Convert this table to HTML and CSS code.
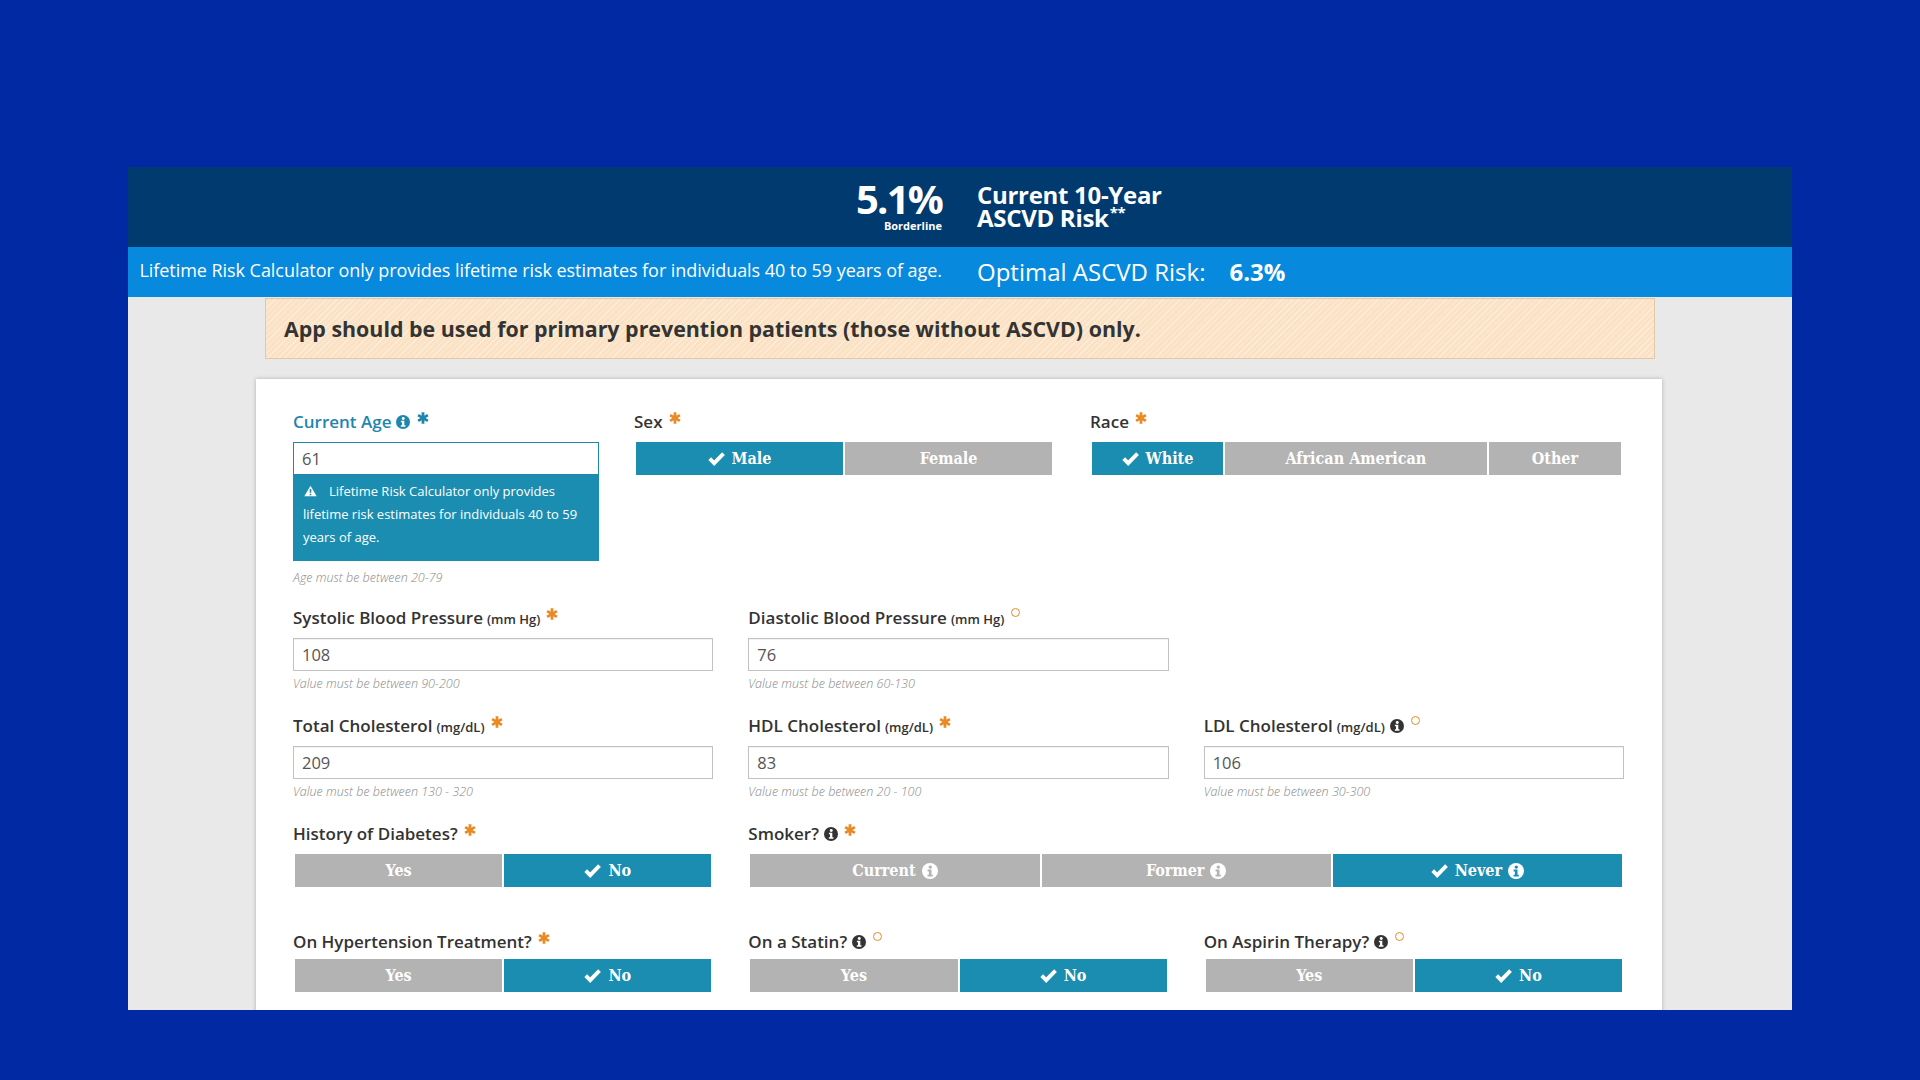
FILE: index.html
```html
<!DOCTYPE html>
<html lang="en">
<head>
<meta charset="utf-8">
<title>ASCVD Risk Estimator</title>
<link rel="stylesheet" href="styles.css">
</head>
<body>
<svg width="0" height="0" class="defs">
  <defs>
    <symbol id="info" viewBox="0 0 16 16">
      <circle cx="8" cy="8" r="8" class="outer"/>
      <circle cx="8.3" cy="4.1" r="1.7" class="inner"/>
      <path d="M5.6 6.6h3.9v5.1h1.3v1.8H5.5v-1.8h1.4V8.4H5.6z" class="inner"/>
    </symbol>
    <symbol id="ast" viewBox="0 0 12 12">
      <path d="M6 0.3v11.4M1.1 3.15l9.8 5.7M1.1 8.85l9.8-5.7" fill="none" stroke-width="2.8"/>
    </symbol>
    <symbol id="check" viewBox="0 0 16 16">
      <path d="M1.6 8.2l4.2 4.2L14.6 3.4" fill="none" stroke="#fff" stroke-width="3.6" stroke-linejoin="miter"/>
    </symbol>
  </defs>
</svg>

<div class="app">
  <header class="hdr">
    <div class="hdr-left">
      <div class="big">5.1%</div>
      <div class="level">Borderline</div>
    </div>
    <div class="hdr-right">
      <div class="title">Current 10-Year<br>ASCVD Risk<sup>**</sup></div>
    </div>
  </header>

  <div class="subbar">
    <div class="sub-left">Lifetime Risk Calculator only provides lifetime risk estimates for individuals 40 to 59 years of age.</div>
    <div class="sub-right"><span class="opt-label">Optimal ASCVD Risk:</span><span class="opt-val">6.3%</span></div>
  </div>

  <main class="body">
    <div class="banner">App should be used for primary prevention patients (those without ASCVD) only.</div>

    <section class="card">
      <div class="row row-first">
        <div class="field">
          <div class="label focus">Current Age <svg class="info teal"><use href="#info"/></svg> <svg class="ast teal-ast"><use href="#ast"/></svg></div>
          <input class="inp inp-focus" type="text" value="61">
          <div class="tip"><svg class="warn" viewBox="0 0 16 14"><path d="M8 0.5L15.6 13.5H0.4z" fill="#fff"/><path d="M8 4.6v4.6" stroke="#1b8db1" stroke-width="2"/><rect x="7" y="10.4" width="2" height="1.9" fill="#1b8db1"/></svg><span>Lifetime Risk Calculator only provides lifetime risk estimates for individuals 40 to 59 years of age.</span></div>
          <div class="help help-tip">Age must be between 20-79</div>
        </div>
        <div class="field">
          <div class="label">Sex <svg class="ast"><use href="#ast"/></svg></div>
          <div class="btns">
            <button class="btn on"><svg class="chk"><use href="#check"/></svg>Male</button>
            <button class="btn">Female</button>
          </div>
        </div>
        <div class="field">
          <div class="label">Race <svg class="ast"><use href="#ast"/></svg></div>
          <div class="btns race">
            <button class="btn on"><svg class="chk"><use href="#check"/></svg>White</button>
            <button class="btn">African American</button>
            <button class="btn">Other</button>
          </div>
        </div>
      </div>

      <div class="row">
        <div class="field">
          <div class="label">Systolic Blood Pressure <small>(mm Hg)</small> <svg class="ast"><use href="#ast"/></svg></div>
          <input class="inp" type="text" value="108">
          <div class="help">Value must be between 90-200</div>
        </div>
        <div class="field">
          <div class="label">Diastolic Blood Pressure <small>(mm Hg)</small> <span class="opt"></span></div>
          <input class="inp" type="text" value="76">
          <div class="help">Value must be between 60-130</div>
        </div>
        <div class="field"></div>
      </div>

      <div class="row">
        <div class="field">
          <div class="label">Total Cholesterol <small>(mg/dL)</small> <svg class="ast"><use href="#ast"/></svg></div>
          <input class="inp" type="text" value="209">
          <div class="help">Value must be between 130 - 320</div>
        </div>
        <div class="field">
          <div class="label">HDL Cholesterol <small>(mg/dL)</small> <svg class="ast"><use href="#ast"/></svg></div>
          <input class="inp" type="text" value="83">
          <div class="help">Value must be between 20 - 100</div>
        </div>
        <div class="field">
          <div class="label">LDL Cholesterol <small>(mg/dL)</small> <svg class="info"><use href="#info"/></svg> <span class="opt"></span></div>
          <input class="inp" type="text" value="106">
          <div class="help">Value must be between 30-300</div>
        </div>
      </div>

      <div class="row">
        <div class="field">
          <div class="label">History of Diabetes? <svg class="ast"><use href="#ast"/></svg></div>
          <div class="btns">
            <button class="btn">Yes</button>
            <button class="btn on"><svg class="chk"><use href="#check"/></svg>No</button>
          </div>
          <div class="help"></div>
        </div>
        <div class="field span2">
          <div class="label">Smoker? <svg class="info"><use href="#info"/></svg> <svg class="ast"><use href="#ast"/></svg></div>
          <div class="btns">
            <button class="btn">Current <svg class="binfo"><use href="#info"/></svg></button>
            <button class="btn">Former <svg class="binfo"><use href="#info"/></svg></button>
            <button class="btn on"><svg class="chk"><use href="#check"/></svg>Never <svg class="binfo"><use href="#info"/></svg></button>
          </div>
          <div class="help"></div>
        </div>
      </div>

      <div class="row row-last">
        <div class="field">
          <div class="label">On Hypertension Treatment? <svg class="ast"><use href="#ast"/></svg></div>
          <div class="btns">
            <button class="btn">Yes</button>
            <button class="btn on"><svg class="chk"><use href="#check"/></svg>No</button>
          </div>
        </div>
        <div class="field">
          <div class="label">On a Statin? <svg class="info"><use href="#info"/></svg> <span class="opt"></span></div>
          <div class="btns">
            <button class="btn">Yes</button>
            <button class="btn on"><svg class="chk"><use href="#check"/></svg>No</button>
          </div>
        </div>
        <div class="field">
          <div class="label">On Aspirin Therapy? <svg class="info"><use href="#info"/></svg> <span class="opt"></span></div>
          <div class="btns">
            <button class="btn">Yes</button>
            <button class="btn on"><svg class="chk"><use href="#check"/></svg>No</button>
          </div>
        </div>
      </div>
    </section>
  </main>
</div>
</body>
</html>
```

FILE: styles.css
```css
* { box-sizing: border-box; }

html, body {
  margin: 0;
  padding: 0;
}

body {
  background: #0029a3;
  font-family: "Open Sans", "Liberation Sans", sans-serif;
  color: #333;
  padding-top: 167px;
  height: 1080px;
  overflow: hidden;
}

.defs { position: absolute; }

/* icon colours (resolved inside <use> shadow trees through custom properties) */
.outer { fill: var(--ic-outer, #333); }
.inner { fill: var(--ic-inner, #fff); }

.app {
  margin: 0 128px;
  height: 843px;
  overflow: hidden;
  background: #e9e9e9;
}

/* Header */
.hdr {
  display: grid;
  grid-template-columns: 1fr 1fr;
  height: 80px;
  background: #003a6e;
  color: #fff;
}

.hdr-left {
  display: flex;
  flex-direction: column;
  align-items: flex-end;
  padding-right: 18px;
  padding-top: 12px;
}

.big {
  font-size: 40px;
  font-weight: 700;
  line-height: 40px;
  letter-spacing: -1.8px;
}

.level {
  font-size: 11px;
  font-weight: 700;
  line-height: 12px;
  margin-top: 1px;
}

.hdr-right {
  padding-left: 17px;
  padding-top: 16px;
}

.title {
  font-size: 24px;
  font-weight: 700;
  line-height: 23px;
  letter-spacing: -0.3px;
}

.title sup {
  font-size: 15px;
  line-height: 0;
  vertical-align: 9px;
  margin-left: 1px;
}

/* Sub bar */
.subbar {
  display: grid;
  grid-template-columns: 1fr 1fr;
  height: 50px;
  background: #0789dd;
  color: #fff;
  align-items: center;
}

.sub-left {
  font-size: 18px;
  text-align: right;
  padding-right: 18px;
  white-space: nowrap;
  letter-spacing: -0.05px;
  margin-top: -4px;
}

.sub-right {
  padding-left: 17px;
  font-size: 24px;
  display: flex;
  align-items: baseline;
  margin-top: -2px;
}

.opt-val {
  font-weight: 700;
  margin-left: 24px;
  font-size: 24px;
}

/* Body */
.body {
  padding-top: 1px;
}

.banner {
  margin: 0 137px;
  height: 61px;
  border: 1px solid #e2c9a6;
  background-color: #fbe2c4;
  background-image: repeating-linear-gradient(-45deg, rgba(255,255,255,0.35) 0 1px, transparent 1px 4px);
  font-size: 21.4px;
  font-weight: 700;
  color: #333;
  display: flex;
  align-items: center;
  padding-left: 18px;
}

.card {
  margin: 20px 130px 0 128px;
  background: #fff;
  box-shadow: 0 0 4px rgba(0,0,0,0.25);
  padding: 31px 38px 40px 37px;
}

.row {
  display: grid;
  grid-template-columns: 1fr 1fr 1fr;
  column-gap: 35px;
  margin-bottom: 22px;
}

.row-first {
  grid-template-columns: 306px 420px 534px;
  column-gap: 35px;
  margin-bottom: 20px;
}

.row-first .field:nth-child(3) { margin-left: 1px; }

.span2 { grid-column: span 2; }

.label {
  font-size: 17px;
  font-weight: 600;
  line-height: 24px;
  height: 24px;
  margin-bottom: 8px;
  color: #333;
  white-space: nowrap;
  display: flex;
  align-items: center;
}

.row-last .label { margin-bottom: 5px; }

.label small {
  font-size: 13px;
  font-weight: 600;
  margin-left: 4px;
  margin-top: 2px;
}

.label.focus { color: #1f86ad; }

.info {
  width: 14px;
  height: 14px;
  margin-left: 5px;
  --ic-outer: #333;
  --ic-inner: #fff;
}

.info.teal { --ic-outer: #1f86ad; }

.ast {
  width: 12px;
  height: 12px;
  stroke: #e98a25;
  margin-left: 6px;
  margin-top: -8px;
}

.ast.teal-ast { stroke: #1f86ad; margin-left: 7px; }

.opt {
  display: inline-block;
  width: 9px;
  height: 9px;
  border: 1.5px solid #e98a25;
  border-radius: 50%;
  margin-left: 7px;
  margin-top: -12px;
}

.inp {
  display: block;
  width: 100%;
  height: 33px;
  border: 1px solid #c2c2c2;
  box-shadow: inset 0 1px 1px rgba(0,0,0,0.06);
  padding: 0 8px;
  font-family: "Open Sans", "Liberation Sans", sans-serif;
  font-size: 16.5px;
  color: #555;
  background: #fff;
  outline: none;
}

.inp-focus {
  border-color: #1f86ad;
  box-shadow: none;
}

.tip {
  background: #1b8db1;
  color: #fff;
  font-size: 13px;
  line-height: 23px;
  padding: 5px 10px 9px 10px;
  height: 86px;
}

.warn {
  width: 13px;
  height: 12px;
  margin: 0 12px 0 1px;
  vertical-align: -1px;
}

.help {
  margin-top: 5px;
  height: 16px;
  font-size: 12.5px;
  line-height: 16px;
  font-style: italic;
  font-weight: 300;
  color: #888;
}

.help-tip { margin-top: 9px; }

.btns {
  display: flex;
  gap: 2px;
  height: 33px;
  margin: 1px 2px 0 2px;
}

.btn {
  flex: 1 1 0;
  border: 0;
  margin: 0;
  padding: 0;
  height: 100%;
  background: #b3b3b3;
  color: #fff;
  font-family: "DejaVu Serif", "Liberation Serif", serif;
  font-stretch: condensed;
  font-weight: 700;
  font-size: 16px;
  display: flex;
  align-items: center;
  justify-content: center;
  cursor: pointer;
}

.btn.on { background: #1b8db1; }

.race .btn:nth-child(1) { flex: 107 1 0; }
.race .btn:nth-child(2) { flex: 214 1 0; }
.race .btn:nth-child(3) { flex: 108 1 0; }

.chk {
  width: 17px;
  height: 17px;
  margin-right: 7px;
}

.binfo {
  width: 16px;
  height: 16px;
  margin-left: 6px;
  --ic-outer: #fff;
  --ic-inner: #b3b3b3;
}

.btn.on .binfo { --ic-inner: #1b8db1; }
```
